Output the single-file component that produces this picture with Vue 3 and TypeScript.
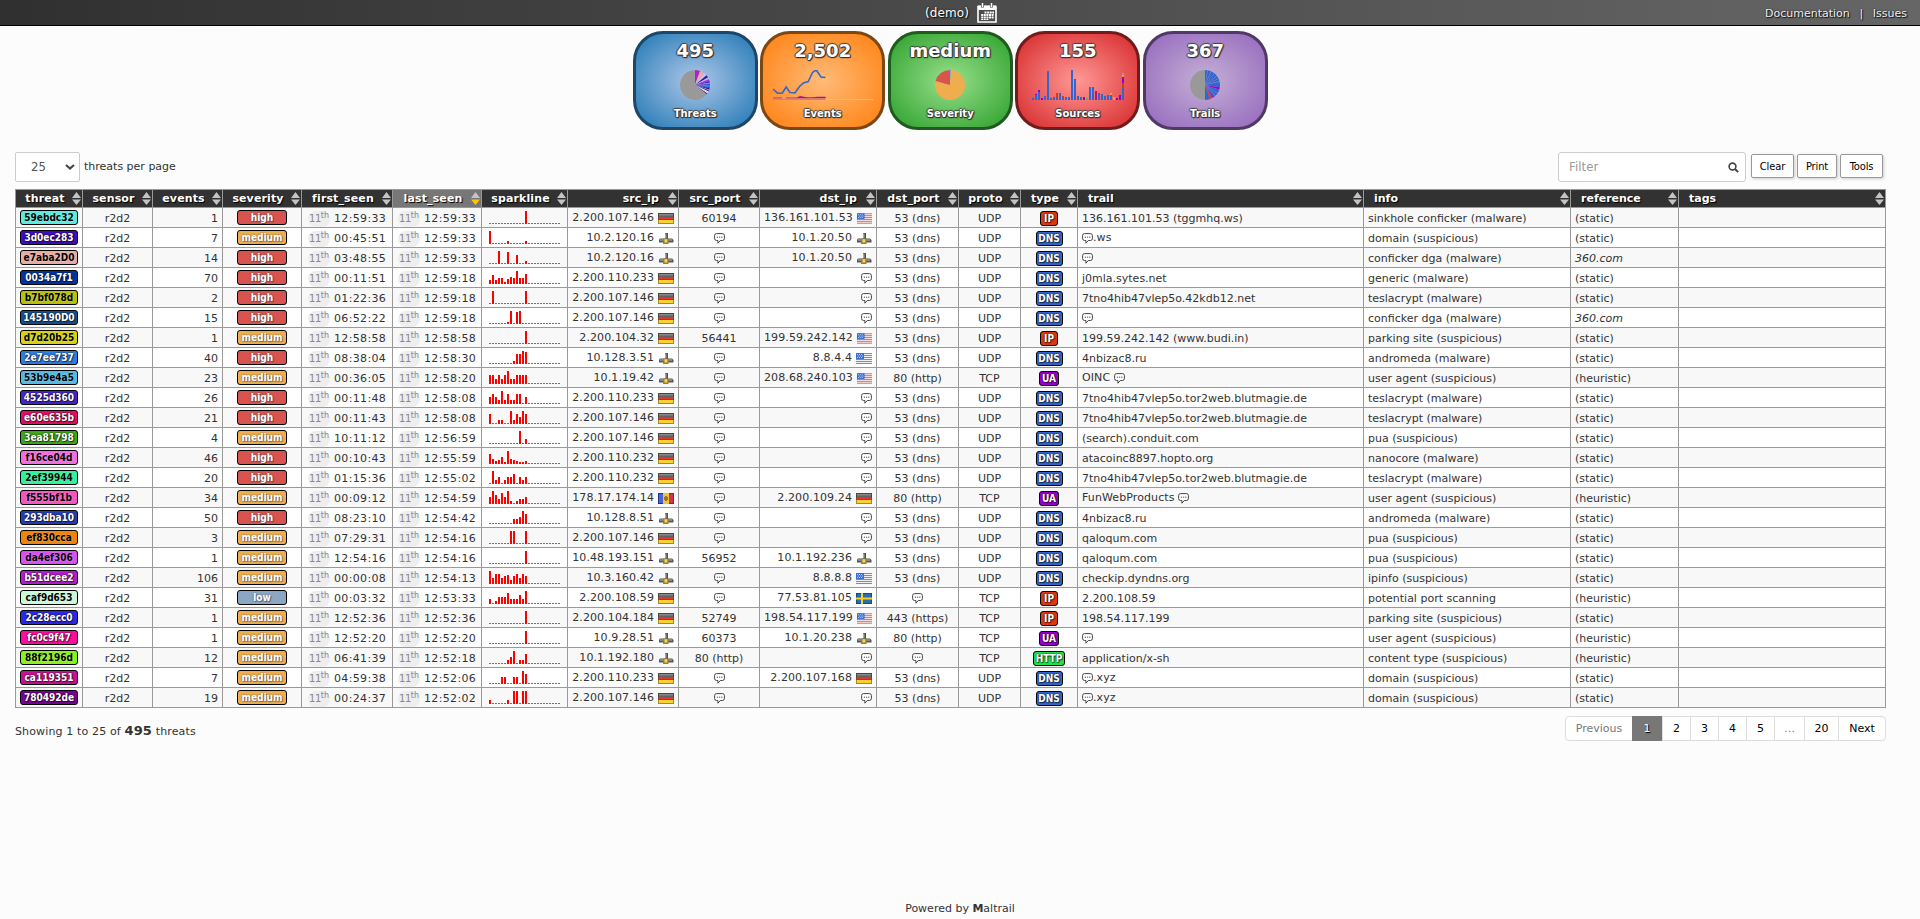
<script setup lang="ts">
interface Column {
  name: string
  width: number
  align: 'left' | 'center' | 'right'
}

interface Threat {
  id: string
  color: string
  dark: boolean
  events: number
  severity: string
  first: string
  last: string
  spark: number[]
  src: string
  srcIcon: string
  srcPort: string
  dst: string
  dstIcon: string
  dstPort: string
  proto: string
  type: string
  trail: string
  info: string
  reference: string
}

const columns: Column[] = [
  { name: 'threat', width: 67, align: 'center' },
  { name: 'sensor', width: 70, align: 'center' },
  { name: 'events', width: 70, align: 'center' },
  { name: 'severity', width: 79, align: 'center' },
  { name: 'first_seen', width: 91, align: 'center' },
  { name: 'last_seen', width: 89, align: 'center' },
  { name: 'sparkline', width: 86, align: 'center' },
  { name: 'src_ip', width: 111, align: 'right' },
  { name: 'src_port', width: 81, align: 'center' },
  { name: 'dst_ip', width: 117, align: 'right' },
  { name: 'dst_port', width: 82, align: 'center' },
  { name: 'proto', width: 62, align: 'center' },
  { name: 'type', width: 57, align: 'center' },
  { name: 'trail', width: 286, align: 'left' },
  { name: 'info', width: 207, align: 'left' },
  { name: 'reference', width: 108, align: 'left' },
  { name: 'tags', width: 207, align: 'left' },
]

// "~" stands for a collapsed value, shown as a speech bubble.
// id|background|text|events|severity|first|last|spark|src|port|dst|port|proto|type|trail|info|reference
const source = `59ebdc32|#59ebdc|b|1|high|12:59:33|12:59:33|12:13|2.200.107.146 de|60194|136.161.101.53 us|53 (dns)|UDP|IP|136.161.101.53 (tggmhq.ws)|sinkhole conficker (malware)|(static)
3d0ec283|#3d0ec2|w|7|medium|00:45:51|12:59:33|0:13 6:3 12:3|10.2.120.16 lan|~|10.1.20.50 lan|53 (dns)|UDP|DNS|~.ws|domain (suspicious)|(static)
e7aba2D0|#e7aba2|b|14|high|03:48:55|12:59:33|3:13 6:12 9:9 12:3|10.2.120.16 lan|~|10.1.20.50 lan|53 (dns)|UDP|DNS|~|conficker dga (malware)|360.com
0034a7f1|#0034a7|w|70|high|00:11:51|12:59:18|0:4 1:9 2:4 3:6 4:6 5:2 6:5 7:7 8:6 9:13 10:6 11:6 12:10|2.200.110.233 de|~|~|53 (dns)|UDP|DNS|j0mla.sytes.net|generic (malware)|(static)
b7bf078d|#b7bf07|b|2|high|01:22:36|12:59:18|1:13 12:13|2.200.107.146 de|~|~|53 (dns)|UDP|DNS|7tno4hib47vlep5o.42kdb12.net|teslacrypt (malware)|(static)
145190D0|#145190|w|15|high|06:52:22|12:59:18|6:2 7:13 9:12 10:13|2.200.107.146 de|~|~|53 (dns)|UDP|DNS|~|conficker dga (malware)|360.com
d7d20b25|#d7d20b|b|1|medium|12:58:58|12:58:58|12:13|2.200.104.32 de|56441|199.59.242.142 us|53 (dns)|UDP|IP|199.59.242.142 (www.budi.in)|parking site (suspicious)|(static)
2e7ee737|#2e7ee7|w|40|high|08:38:04|12:58:30|8:3 9:10 10:10 11:13 12:12|10.128.3.51 lan|~|8.8.4.4 us|53 (dns)|UDP|DNS|4nbizac8.ru|andromeda (malware)|(static)
53b9e4a5|#53b9e4|b|23|medium|00:36:05|12:58:20|0:9 1:9 2:5 3:9 4:5 5:9 6:13 7:5 8:5 9:9 10:9 11:9 12:9|10.1.19.42 lan|~|208.68.240.103 us|80 (http)|TCP|UA|OINC ~|user agent (suspicious)|(heuristic)
4525d360|#4525d3|w|26|high|00:11:48|12:58:08|0:7 1:10 2:7 3:4 4:13 5:4 6:10 7:4 8:4 9:10 10:10 12:7|2.200.110.233 de|~|~|53 (dns)|UDP|DNS|7tno4hib47vlep5o.tor2web.blutmagie.de|teslacrypt (malware)|(static)
e60e635b|#e60e63|w|21|high|00:11:43|12:58:08|0:10 3:4 4:4 7:13 8:4 9:10 10:7 11:13 12:10|2.200.107.146 de|~|~|53 (dns)|UDP|DNS|7tno4hib47vlep5o.tor2web.blutmagie.de|teslacrypt (malware)|(static)
3ea81798|#3ea817|w|4|medium|10:11:12|12:56:59|10:13 12:5|2.200.107.146 de|~|~|53 (dns)|UDP|DNS|(search).conduit.com|pua (suspicious)|(static)
f16ce04d|#f16ce0|b|46|high|00:10:43|12:55:59|0:10 1:5 2:3 3:4 4:7 5:2 6:13 7:5 8:4 9:3 10:2 11:2 12:3|2.200.110.232 de|~|~|53 (dns)|UDP|DNS|atacoinc8897.hopto.org|nanocore (malware)|(static)
2ef39944|#2ef399|b|20|high|01:15:36|12:55:02|1:13 2:4 3:7 5:4 6:7 7:7 8:10 10:7 11:4 12:7|2.200.110.232 de|~|~|53 (dns)|UDP|DNS|7tno4hib47vlep5o.tor2web.blutmagie.de|teslacrypt (malware)|(static)
f555bf1b|#f555bf|b|34|medium|00:09:12|12:54:59|0:7 1:13 2:9 3:5 4:11 5:7 6:13 7:3 9:3 10:5 11:5 12:7|178.17.174.14 md|~|2.200.109.24 de|80 (http)|TCP|UA|FunWebProducts ~|user agent (suspicious)|(heuristic)
293dba10|#293dba|w|50|high|08:23:10|12:54:42|8:5 9:5 10:7 11:13 12:10|10.128.8.51 lan|~|~|53 (dns)|UDP|DNS|4nbizac8.ru|andromeda (malware)|(static)
ef830cca|#ef830c|b|3|medium|07:29:31|12:54:16|7:13 8:13 12:13|2.200.107.146 de|~|~|53 (dns)|UDP|DNS|qaloqum.com|pua (suspicious)|(static)
da4ef306|#da4ef3|b|1|medium|12:54:16|12:54:16|12:13|10.48.193.151 lan|56952|10.1.192.236 lan|53 (dns)|UDP|DNS|qaloqum.com|pua (suspicious)|(static)
b51dcee2|#b51dce|w|106|medium|00:00:08|12:54:13|0:13 1:6 2:10 3:10 4:6 5:8 6:9 7:4 8:8 9:10 10:6 11:10 12:8|10.3.160.42 lan|~|8.8.8.8 us|53 (dns)|UDP|DNS|checkip.dyndns.org|ipinfo (suspicious)|(static)
caf9d653|#caf9d6|b|31|low|00:03:32|12:53:33|0:5 2:3 3:7 4:7 5:7 6:11 7:5 8:5 9:5 10:9 11:5 12:13|2.200.108.59 de|~|77.53.81.105 se|~|TCP|IP|2.200.108.59|potential port scanning|(heuristic)
2c28ecc0|#2c28ec|w|1|medium|12:52:36|12:52:36|12:13|2.200.104.184 de|52749|198.54.117.199 us|443 (https)|TCP|IP|198.54.117.199|parking site (suspicious)|(static)
fc0c9f47|#fc0c9f|w|1|medium|12:52:20|12:52:20|12:13|10.9.28.51 lan|60373|10.1.20.238 lan|80 (http)|TCP|UA|~|user agent (suspicious)|(heuristic)
88f2196d|#88f219|b|12|medium|06:41:39|12:52:18|6:4 7:7 8:13 10:4 11:4 12:10|10.1.192.180 lan|80 (http)|~|~|TCP|HTTP|application/x-sh|content type (suspicious)|(heuristic)
ca119351|#ca1193|w|7|medium|04:59:38|12:52:06|4:7 5:7 8:7 9:7 11:13 12:10|2.200.110.233 de|~|2.200.107.168 de|53 (dns)|UDP|DNS|~.xyz|domain (suspicious)|(static)
780492de|#780492|w|19|medium|00:24:37|12:52:02|0:4 6:4 8:13 9:13 11:13 12:13|2.200.107.146 de|~|~|53 (dns)|UDP|DNS|~.xyz|domain (suspicious)|(static)`

function parseSpark(text: string): number[] {
  const bars = Array<number>(24).fill(1)
  for (const item of text.split(' ')) {
    const [i, h] = item.split(':').map(Number)
    bars[i] = h
  }
  return bars
}

const threats: Threat[] = source.split('\n').map((line) => {
  const f = line.split('|')
  const [src, srcIcon = ''] = f[8].split(' ')
  const [dst, dstIcon = ''] = f[10].split(' ')
  return {
    id: f[0], color: f[1], dark: f[2] === 'b', events: Number(f[3]), severity: f[4],
    first: f[5], last: f[6], spark: parseSpark(f[7]),
    src, srcIcon, srcPort: f[9], dst, dstIcon, dstPort: f[11],
    proto: f[12], type: f[13], trail: f[14], info: f[15], reference: f[16],
  }
})

const pieces = (text: string): string[] => text.split(/(~)/).filter((p) => p !== '')

interface Slice { d: string; fill: string }

// Consecutive clockwise slices starting at twelve o'clock; each part gives its end angle in degrees.
function pie(parts: [number, string][]): Slice[] {
  let from = 0
  return parts.map(([to, fill]) => {
    const point = (deg: number) => {
      const a = (deg * Math.PI) / 180
      return `${(15 + 15 * Math.sin(a)).toFixed(2)} ${(15 - 15 * Math.cos(a)).toFixed(2)}`
    }
    const d = `M15 15L${point(from)}A15 15 0 ${to - from > 180 ? 1 : 0} 1 ${point(to)}Z`
    from = to
    return { d, fill }
  })
}

const threatPie = pie([
  [20, '#b51dce'], [38, '#e7aba2'], [50, '#e3b5e6'], [60, '#0034a7'], [67, '#e79be0'], [75, '#c41ede'],
  [81, '#2a35c8'], [86, '#f555bf'], [92, '#293dba'], [99, '#2e7ee7'], [103, '#145190'], [108, '#3d0ec2'],
  [112, '#f16ce0'], [116, '#1c2266'], [120, '#caf9d6'], [124, '#f7e2b8'], [128, '#4a1690'], [131, '#7d7ac0'], [360, '#999'],
])
const severityPie = pie([[5, '#8ba7c4'], [285, '#f0ad4e'], [360, '#d9534f']])
const trailPie = pie([
  [10, '#3366cc'], [11, '#6b8fdc'], [24, '#3366cc'], [25, '#6b8fdc'], [38, '#3366cc'], [39, '#6b8fdc'],
  [52, '#3366cc'], [53, '#6b8fdc'], [64, '#3366cc'], [65, '#6b8fdc'], [76, '#3366cc'], [77, '#6b8fdc'],
  [99, '#3366cc'], [108, '#9900cc'], [123, '#3366cc'], [124, '#6b8fdc'], [136, '#3366cc'], [137, '#6b8fdc'], [143, '#3366cc'],
  [149, '#9900cc'], [153, '#3366cc'], [161, '#dc3912'], [180, '#3366cc'], [360, '#999'],
])

// Stacked columns, bottom up: b blue, r red, p purple, g green, o orange, m magenta, x gray.
const stackColors: Record<string, string> = {
  b: '#3366cc', r: '#dc3912', p: '#9900cc', g: '#33cc33', o: '#ff9933', m: '#c00d7a', x: '#999',
}
const stacks = (
  'b2 b4r1p1 b8p2 p2 b4 b28r1 b2 r1b2 b3r4 b7 b2r2 b3 b2r1 b30 b21 b4 b3 p3 g2 b13 b13 m9 b7 b6 b4 b5 b5o2 o3 p2 p5 b13r4p6o2x2'
).split(' ').map((stack) => {
  let top = 30
  return [...stack.matchAll(/([a-z])(\d+)/g)].map((m) => {
    top -= Number(m[2])
    return { y: top, h: Number(m[2]), fill: stackColors[m[1]] }
  })
})

const pages = ['Previous', '1', '2', '3', '4', '5', '…', '20', 'Next']
</script>

<template>
  <div class="page">
    <svg class="defs" width="0" height="0" aria-hidden="true">
      <defs>
        <linearGradient id="gloss" x1="0" y1="0" x2="0" y2="1">
          <stop offset="0" stop-color="#fff" stop-opacity=".35" />
          <stop offset=".5" stop-color="#fff" stop-opacity=".08" />
          <stop offset="1" stop-color="#fff" stop-opacity=".12" />
        </linearGradient>
        <symbol id="de" viewBox="0 0 16 11">
          <rect width="16" height="11" fill="#4b4a38" />
          <rect y="4" width="16" height="4" fill="#8e3f25" />
          <rect y="7" width="16" height="4" fill="#a88b1f" />
          <rect x="1" y="1" width="14" height="3" fill="#555" />
          <rect x="1" y="4" width="14" height="3" fill="#e01f1f" />
          <rect x="1" y="7" width="14" height="3" fill="#fbd033" />
          <rect x="1" y="1" width="14" height="5" fill="url(#gloss)" />
        </symbol>
        <symbol id="us" viewBox="0 0 16 11">
          <rect width="16" height="11" fill="#f4f1f1" />
          <path d="M0 .5H16M0 2.5H16M0 4.5H16M0 6.5H16M0 8.5H16M0 10.5H16" stroke="#e2675c" />
          <rect width="8" height="6" fill="#3a6fd0" />
          <path d="M1 1.5H7M2 3H7M1 4.5H7" stroke="#dfe9ff" stroke-width=".8" stroke-dasharray="1 1" />
        </symbol>
        <symbol id="md" viewBox="0 0 16 11">
          <rect width="16" height="11" fill="#26327c" />
          <rect x="1" y="1" width="5" height="9" fill="#4b66d8" />
          <rect x="5" width="6" height="11" fill="#e8c933" />
          <rect x="11" width="5" height="11" fill="#a01a26" />
          <rect x="11" y="1" width="4" height="9" fill="#d33343" />
          <path d="M7 3h2v1h1v3H9v1H7V7H6V4h1z" fill="#a56a36" />
        </symbol>
        <symbol id="se" viewBox="0 0 16 11">
          <rect width="16" height="11" fill="#164a82" />
          <rect x="1" y="1" width="14" height="9" fill="#2b6cab" />
          <path d="M6 0V11M0 5.5H16" stroke="#f6d02f" stroke-width="2" />
        </symbol>
        <symbol id="lan" viewBox="0 0 16 11">
          <path d="M7 0h3v6H7z" fill="#4c5052" />
          <path d="M7.300 .5h1v5h-1z" fill="#c9cfd0" />
          <path d="M1 6.500L2 5.500h12l1.500 1.500v2.500H1z" fill="#53585a" />
          <path d="M2 7h12" stroke="#b4bcbc" />
          <path d="M5.500 5.500h5v5.500h-5.500z" fill="#a67c17" />
          <path d="M6.500 6.200h2.800v3.300H6.500z" fill="#f6d466" />
        </symbol>
        <symbol id="bubble" viewBox="0 0 11 11">
          <path d="M2.600 .6h5.800q2 0 2 2v2.900q0 2-2 2H6.300L3.900 10.200V7.500H2.600q-2 0-2-2V2.600q0-2 2-2z" fill="#fff" stroke="#444" stroke-width="1" />
          <path d="M2.800 4.200h5.600" stroke="#444" stroke-width="1" stroke-dasharray="1.200 1" />
        </symbol>
      </defs>
    </svg>

    <header class="topbar">
      <div class="period">
        <span>(demo)</span>
        <svg width="20" height="20" viewBox="0 0 20 20">
          <path d="M1 3.500h18V19H1z" fill="none" stroke="#fff" stroke-width="1.600" />
          <path d="M1 2.500h18v4.500H1z" fill="#fff" />
          <path d="M5.500 .5v4M14.500 .5v4" stroke="#555" stroke-width="3" />
          <path d="M5.500 0v4M14.500 0v4" stroke="#fff" stroke-width="1.500" />
          <path d="M7.500 9.500H17M4.200 12H17M4.200 14.500H17" stroke="#fff" stroke-width="1.900" stroke-dasharray="2 .6" />
          <path d="M4.200 16.500H12" stroke="#fff" stroke-width="1" stroke-dasharray="2 .6" />
        </svg>
      </div>
      <nav class="links"><a>Documentation</a><span>|</span><a>Issues</a></nav>
    </header>

    <section class="cards">
      <div class="card blue">
        <strong>495</strong>
        <svg width="100" height="30"><g transform="translate(35 0)"><path v-for="(s, i) in threatPie" :key="i" :d="s.d" :fill="s.fill" /></g></svg>
        <span>Threats</span>
      </div>
      <div class="card orange">
        <strong>2,502</strong>
        <svg width="100" height="30">
          <path d="M0 29.500H100" stroke="#ffb870" />
          <path d="M0 28H9M13 28H52.500" stroke="#b8266a" stroke-width="1" />
          <path d="M0 29H52.500" stroke="#c98a9a" stroke-width="1" />
          <path d="M24 27.500L27 26L35 27.500H40L44 26.700H52.500V28H24z" fill="#a3139b" />
          <path d="M0 29.500H52.500" stroke="#8a9a8e" stroke-width=".8" />
          <path d="M48 29.500H52.500" stroke="#4bd832" />
          <path d="M0 19L4.500 23.200H9.200L13.200 17L17 22.500L22 23L26.500 16.500L30.500 13L35.200 11.500L39.500 2.500L42 .7H43.800L48 7L52.500 7.500" stroke="#3366cc" stroke-width="1.600" fill="none" />
        </svg>
        <span>Events</span>
      </div>
      <div class="card green">
        <strong>medium</strong>
        <svg width="100" height="30"><g transform="translate(35 0)"><path v-for="(s, i) in severityPie" :key="i" :d="s.d" :fill="s.fill" /></g></svg>
        <span>Severity</span>
      </div>
      <div class="card red">
        <strong>155</strong>
        <svg width="100" height="30">
          <g v-for="(stack, i) in stacks" :key="i">
            <rect v-for="(bar, j) in stack" :key="j" :x="4 + i * 3" :y="bar.y" width="2" :height="bar.h" :fill="bar.fill" />
          </g>
        </svg>
        <span>Sources</span>
      </div>
      <div class="card purple">
        <strong>367</strong>
        <svg width="100" height="30"><g transform="translate(35 0)"><path v-for="(s, i) in trailPie" :key="i" :d="s.d" :fill="s.fill" /></g></svg>
        <span>Trails</span>
      </div>
    </section>

    <main class="content">
      <div class="controls">
        <div class="length">
          <div class="select">
            <span>25</span>
            <svg width="10" height="6" viewBox="0 0 10 6"><path d="M1 1L5 4.600L9 1" fill="none" stroke="#444" stroke-width="2" /></svg>
          </div>
          <span>threats per page</span>
        </div>
        <div class="tools">
          <div class="filter">
            <span>Filter</span>
            <svg width="11" height="11" viewBox="0 0 11 11"><circle cx="4.500" cy="4.500" r="3.400" fill="none" stroke="#444" stroke-width="1.600" /><path d="M7 7L10.200 10.200" stroke="#444" stroke-width="1.900" /></svg>
          </div>
          <button class="clear">Clear</button>
          <button class="print">Print</button>
          <button class="more">Tools</button>
        </div>
      </div>

      <table>
        <colgroup>
          <col v-for="c in columns" :key="c.name" :style="{ width: c.width + 'px' }">
        </colgroup>
        <thead>
          <tr>
            <th v-for="c in columns" :key="c.name" :class="[c.align, { active: c.name === 'last_seen' }]">
              {{ c.name }}
              <svg class="sort" width="9" height="13" viewBox="0 0 9 13"><path d="M0 6L4.500 0L9 6z" fill="#c4c4c4" /><path class="down" d="M0 7.500H9L4.500 13z" /></svg>
            </th>
          </tr>
        </thead>
        <tbody>
          <tr v-for="t in threats" :key="t.id">
            <td><div class="cell center"><span class="tag" :class="t.dark ? 'dark' : 'light'" :style="{ backgroundColor: t.color }">{{ t.id }}</span></div></td>
            <td><div class="cell center">r2d2</div></td>
            <td><div class="cell right">{{ t.events }}</div></td>
            <td><div class="cell center"><span class="severity" :class="t.severity">{{ t.severity }}</span></div></td>
            <td><div class="cell time"><span class="day">11<sup>th</sup></span>{{ t.first }}</div></td>
            <td><div class="cell time"><span class="day">11<sup>th</sup></span>{{ t.last }}</div></td>
            <td>
              <div class="cell spark">
                <svg width="71" height="13"><rect v-for="(h, i) in t.spark" :key="i" :x="i * 3" :y="13 - h" width="2" :height="h" :fill="h > 1 ? '#f00' : '#e8403c'" /></svg>
              </div>
            </td>
            <td><div class="cell right raised">{{ t.src }}<svg width="16" height="11"><use :href="'#' + t.srcIcon" /></svg></div></td>
            <td>
              <div class="cell center"><svg v-if="t.srcPort === '~'" width="11" height="11"><use href="#bubble" /></svg><template v-else>{{ t.srcPort }}</template></div>
            </td>
            <td>
              <div class="cell right raised"><svg v-if="t.dst === '~'" width="11" height="11"><use href="#bubble" /></svg><template v-else>{{ t.dst }}<svg width="16" height="11"><use :href="'#' + t.dstIcon" /></svg></template></div>
            </td>
            <td>
              <div class="cell center"><svg v-if="t.dstPort === '~'" width="11" height="11"><use href="#bubble" /></svg><template v-else>{{ t.dstPort }}</template></div>
            </td>
            <td><div class="cell center">{{ t.proto }}</div></td>
            <td><div class="cell center"><span class="type" :class="t.type.toLowerCase()">{{ t.type }}</span></div></td>
            <td>
              <div class="cell trail" :class="{ raised: t.trail.includes('~') }"><template v-for="(p, i) in pieces(t.trail)" :key="i"><svg v-if="p === '~'" width="11" height="11"><use href="#bubble" /></svg><span v-else>{{ p }}</span></template></div>
            </td>
            <td><div class="cell">{{ t.info }}</div></td>
            <td><div class="cell" :class="{ italic: t.reference === '360.com' }">{{ t.reference }}</div></td>
            <td><div class="cell" /></td>
          </tr>
        </tbody>
      </table>

      <div class="bottom">
        <div class="summary">Showing 1 to 25 of <strong>495</strong> threats</div>
        <div class="pages">
          <span v-for="p in pages" :key="p" :class="{ current: p === '1', muted: p === 'Previous' || p === '…' }">{{ p }}</span>
        </div>
      </div>
    </main>

    <footer>Powered by <b>M</b>altrail</footer>
  </div>
</template>

<style>
html, body { margin: 0; background: #fcfcfc; overflow: hidden; }
</style>

<style scoped>
.page {
  display: flex;
  flex-direction: column;
  box-sizing: border-box;
  width: 1920px;
  height: 919px;
  background: #fcfcfc;
  color: #333;
  font: 11px/18px Verdana, "DejaVu Sans", sans-serif;
}
.page * { box-sizing: border-box; }
.defs { position: absolute; }

.topbar {
  display: grid;
  grid-template-columns: 1fr auto 1fr;
  align-items: center;
  height: 26px;
  flex: none;
  border-bottom: 1px solid #000;
  background: linear-gradient(to right, #303030, #666);
  color: #fff;
  text-shadow: 1px 1px 1px #111, 0 0 2px #222;
}
.period { grid-column: 2; display: flex; align-items: center; gap: 8px; font-size: 12px; padding-left: 2px; letter-spacing: .1px; }
.period span { padding-top: 1px; }
.links { display: flex; justify-content: flex-end; padding-right: 13px; color: #eee; padding-top: 2px; }
.links span { width: 23px; text-align: center; }

.cards { display: flex; justify-content: center; gap: 2.5px; padding: 5px 19.6px 0 0; height: 104px; flex: none; }
.card {
  display: flex;
  flex-direction: column;
  align-items: center;
  width: 125px;
  height: 99px;
  border: 3px solid;
  border-radius: 30px;
  color: #fff;
  text-shadow: 1px 1px 1px #333, -1px 0 1px #444, 0 -1px 1px #444, 1px 0 1px #444, 0 1px 1px #333;
}
.card strong { font-size: 18px; line-height: 24px; margin: 5px 0 7px; }
.card span { font-size: 10px; font-weight: bold; line-height: 14px; margin-top: 7px; }
.blue { border-color: #1e4667; background: radial-gradient(#aec7e8, #1f77b4); }
.orange { border-color: #7d4714; background: radial-gradient(#ffbb78, #ff7f0e); }
.green { border-color: #205a20; background: radial-gradient(#98df8a, #2ca02c); }
.red { border-color: #701c1c; background: radial-gradient(#ff9896, #d62728); }
.purple { border-color: #4e3a64; background: radial-gradient(#c5b0d5, #9467bd); }

.content { width: 1871px; margin-left: 15px; padding-top: 22px; }
.controls { display: flex; justify-content: space-between; height: 37px; }
.length { display: flex; align-items: center; height: 30px; gap: 4px; line-height: 28px; }
.select {
  display: flex;
  justify-content: space-between;
  align-items: center;
  width: 65px;
  height: 30px;
  padding: 0 4px 0 15px;
  border: 1px solid #ccc;
  border-radius: 2px;
  background: #fff;
  color: #555;
  font-family: Tahoma, "DejaVu Sans Condensed", "DejaVu Sans", sans-serif;
  font-size: 13px;
}
.tools { display: flex; align-items: flex-start; }
.filter {
  display: flex;
  align-items: center;
  justify-content: space-between;
  width: 188px;
  height: 30px;
  margin-right: 5px;
  padding: 0 6px 0 10px;
  border: 1px solid #ccc;
  border-radius: 3px;
  background: #fff;
  color: #999;
  font: 13px Tahoma, "DejaVu Sans Condensed", "DejaVu Sans", sans-serif;
  letter-spacing: .1px;
}
.filter span { margin-top: -1px; }
button {
  height: 24px;
  margin: 2px 3px 0 0;
  padding: 0;
  border: 1px solid #999;
  border-radius: 2px;
  background: #fff;
  box-shadow: 1px 1px 3px #ccc;
  color: #000;
  font: 11px Tahoma, "DejaVu Sans Condensed", "DejaVu Sans", sans-serif;
  letter-spacing: -.1px;
}
.clear, .more { width: 43px; }
.print { width: 40px; }

table { width: 1871px; table-layout: fixed; border-collapse: separate; border-spacing: 0; border: solid #999; border-width: 1px 0 0 1px; }
th {
  position: relative;
  height: 18px;
  padding: 1px 18px 0 10px;
  border: solid #999;
  border-width: 0 1px 1px 0;
  background: #323232;
  color: #fff;
  font-size: 11px;
  line-height: 16px;
  white-space: nowrap;
  letter-spacing: .12px;
  text-shadow: 1px 1px 1px #000;
}
th.left { text-align: left; letter-spacing: 0; }
th.right { text-align: right; padding-right: 19px; }
th.center { text-align: center; padding: 1px 17px 0 9px; }
th.active { background: #777; }
.sort { position: absolute; right: 1px; top: 2px; }
.down { fill: #c4c4c4; }
.active .down { fill: #ffc40c; }
td { height: 20px; padding: 0; border: solid #999; border-width: 0 1px 1px 0; background: #fff; }
tbody tr:nth-child(odd) td { background: #f8f8f8; }
.cell { display: flex; align-items: center; height: 19px; padding: 2px 4px 0; white-space: nowrap; }
.center { justify-content: center; }
.right { justify-content: flex-end; }
.tag, .severity, .type {
  height: 15px;
  border: 1px solid #000;
  border-radius: 3px;
  font: bold 10px/13px Tahoma, "DejaVu Sans Condensed", "DejaVu Sans", sans-serif;
  text-align: center;
  color: #fff;
}
.tag, .severity { margin-top: -2px; }
.tag { width: 58px; }
.tag.dark { color: #000; text-shadow: 0 0 2px rgba(255, 255, 255, .5); }
.tag.light { text-shadow: 0 0 2px #000, 1px 1px 1px rgba(0, 0, 0, .5); }
.severity { width: 50px; text-shadow: 0 0 2px #555, 1px 1px 1px rgba(0, 0, 0, .35); }
.high { background: #d9534f; }
.medium { background: #f0ad4e; }
.low { background: #8ba7c4; }
.type { text-shadow: 0 0 2px #000, 1px 1px 1px rgba(0, 0, 0, .5); }
.dns { width: 27px; background: #3366cc; }
.ip { width: 18px; background: #dc3912; }
.ua { width: 20px; background: #9900cc; }
.http { width: 32px; background: #21e548; }
.time { padding-left: 6px; gap: 4px; letter-spacing: .35px; }
td:nth-child(6) .time { padding-left: 5px; }
.day { display: flex; align-items: center; justify-content: center; width: 22px; height: 16px; border-radius: 8px; background: #eee; color: #888; font-size: 10px; letter-spacing: -.5px; }
.day sup { font-size: 8px; line-height: 8px; margin-top: -5px; letter-spacing: 0; vertical-align: baseline; }
.spark { padding: 0 0 0 7px; }
.spark svg { margin-top: -1px; }
.raised { padding-bottom: 2px; letter-spacing: .1px; }
.right.raised { gap: 4px; }
.raised svg { margin-top: 2px; }
.trail { white-space: pre; }
.italic { font-style: italic; }

.bottom { display: flex; justify-content: space-between; padding-top: 8px; }
.summary { padding-top: 6px; letter-spacing: .14px; }
.summary strong { font-size: 13px; }
.pages { display: flex; height: 25px; border: 1px solid #ddd; border-radius: 4px; background: #fff; color: #000; line-height: 24px; }
.pages span { width: 28px; text-align: center; border-left: 1px solid #ddd; }
.pages span:first-child { width: 66px; border-left: 0; }
.pages span:nth-child(2) { width: 30px; }
.pages span:nth-child(7) { width: 30px; }
.pages span:nth-child(8) { width: 34px; }
.pages span:last-child { width: 47px; }
.pages .muted { color: #777; }
.pages .current { margin: -1px 0; line-height: 24px; border: 1px solid #777; background: #777; color: #fff; text-shadow: 1px 1px 1px #000; }

footer { margin-top: auto; height: 19px; text-align: center; line-height: 18px; }
</style>
